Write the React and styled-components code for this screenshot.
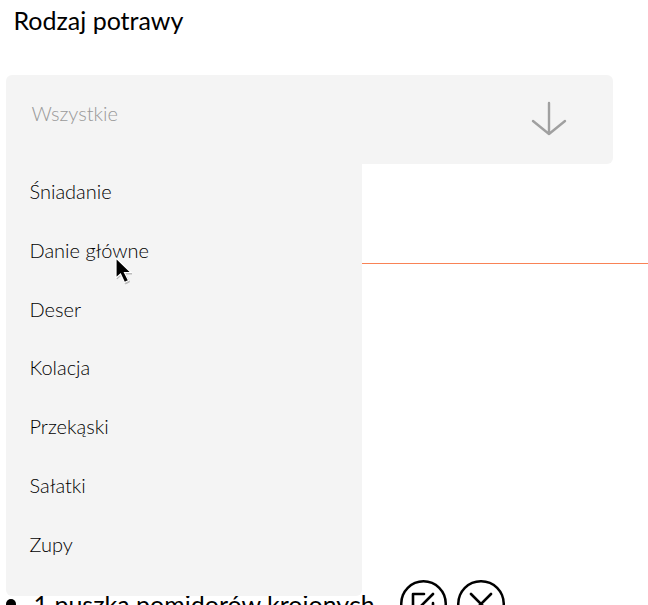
import React from "react";
import styled, { createGlobalStyle } from "styled-components";

const GlobalStyle = createGlobalStyle`
  * { box-sizing: border-box; }
  body { margin: 0; background: #fff; font-family: Lato, sans-serif; color: #000; }
`;

const Page = styled.main`
  width: 648px;
  height: 605px;
  overflow: hidden;
  background: #fff;
`;

const Filter = styled.section`
  display: flex;
  flex-direction: column;
  height: 263px;
  padding-left: 6px;
`;

const Label = styled.label`
  height: 75px;
  padding: 5px 0 0 7.5px;
  font-size: 25px;
  line-height: 30px;
`;

const Select = styled.div`
  position: relative;
  width: 607px;
`;

const Trigger = styled.button`
  display: flex;
  align-items: center;
  justify-content: space-between;
  width: 100%;
  height: 89px;
  padding: 0 46px 2px 25.5px;
  border: 0;
  border-radius: 6px;
  background: #f4f4f4;
  color: #999;
  font: 300 20px/24px Lato, sans-serif;
`;

const Value = styled.span`
  padding-bottom: 12px;
`;

const Menu = styled.ul`
  position: absolute;
  z-index: 1;
  top: 83px;
  left: 0;
  width: 356px;
  height: 438px;
  margin: 0;
  padding: 3px 0 0;
  border-radius: 0 0 6px 6px;
  background: #f4f4f4;
  list-style: none;
`;

const Option = styled.li`
  height: 58.8px;
  padding: 18px 23.5px 0;
  font-size: 20px;
  font-weight: 300;
  line-height: 24px;
  color: #000;
`;

const Pointer = styled.svg`
  position: absolute;
  z-index: 2;
  left: 108px;
  top: 181px;
`;

const Divider = styled.hr`
  height: 1px;
  margin: 0 0 0 6px;
  border: 0;
  background: #f98356;
`;

const Ingredients = styled.ul`
  margin: 0;
  padding: 314px 0 0;
  list-style: none;
`;

const Ingredient = styled.li`
  display: flex;
  align-items: center;
  height: 52px;
  padding-left: 6px;
  font-size: 25px;
  line-height: 30px;
`;

const Bullet = styled.span`
  width: 10px;
  height: 10px;
  border-radius: 50%;
  background: #000;
`;

const IngredientName = styled.span`
  width: 365px;
  padding-left: 17.5px;
  white-space: nowrap;
`;

const RoundButton = styled.button`
  display: grid;
  place-items: center;
  width: 47.5px;
  height: 47.5px;
  margin-left: ${(p) => p.$gap}px;
  padding: 0;
  border: 0;
  border-radius: 50%;
  box-shadow: inset 0 0 0 2.5px #000;
  background: #fff;
`;

const options = ["Śniadanie", "Danie główne", "Deser", "Kolacja", "Przekąski", "Sałatki", "Zupy"];

function ArrowDown() {
  return (
    <svg width="36" height="36" viewBox="0 0 36 36" fill="none" stroke="#a0a0a0" strokeWidth="2.4" strokeLinecap="round" strokeLinejoin="round">
      <path d="M18 2V33M2 20L18 33L34 20" />
    </svg>
  );
}

export default function App() {
  return (
    <Page>
      <GlobalStyle />
      <Filter>
        <Label>Rodzaj potrawy</Label>
        <Select>
          <Trigger>
            <Value>Wszystkie</Value>
            <ArrowDown />
          </Trigger>
          <Menu>
            {options.map((name) => <Option key={name}>{name}</Option>)}
          </Menu>
          <Pointer width="24" height="32" viewBox="0 0 24 32">
            <path d="M3 4V23L7.5 19L11.5 28L15.5 26L11.5 18H18Z" fill="#888" stroke="#888" opacity=".5" />
            <path d="M2 2V22L6.5 18L10.5 26.5L14.5 24.5L10.5 16.5H17Z" fill="#000" stroke="#fff" strokeWidth="1.2" />
          </Pointer>
        </Select>
      </Filter>
      <Divider />
      <Ingredients>
        <Ingredient>
          <Bullet />
          <IngredientName>1 puszka pomidorów krojonych</IngredientName>
          <RoundButton $gap={18.5} aria-label="Edytuj">
            <svg width="26" height="26" viewBox="0 0 26 26" fill="none" stroke="#000" strokeWidth="2.6" strokeLinecap="round" strokeLinejoin="round">
              <path d="M14 3H3V23H23V12M23 3L11 15" />
            </svg>
          </RoundButton>
          <RoundButton $gap={10} aria-label="Usuń">
            <svg width="24" height="24" viewBox="0 0 24 24" fill="none" stroke="#000" strokeWidth="2.6" strokeLinecap="round">
              <path d="M2 2L22 22M22 2L2 22" />
            </svg>
          </RoundButton>
        </Ingredient>
      </Ingredients>
    </Page>
  );
}
